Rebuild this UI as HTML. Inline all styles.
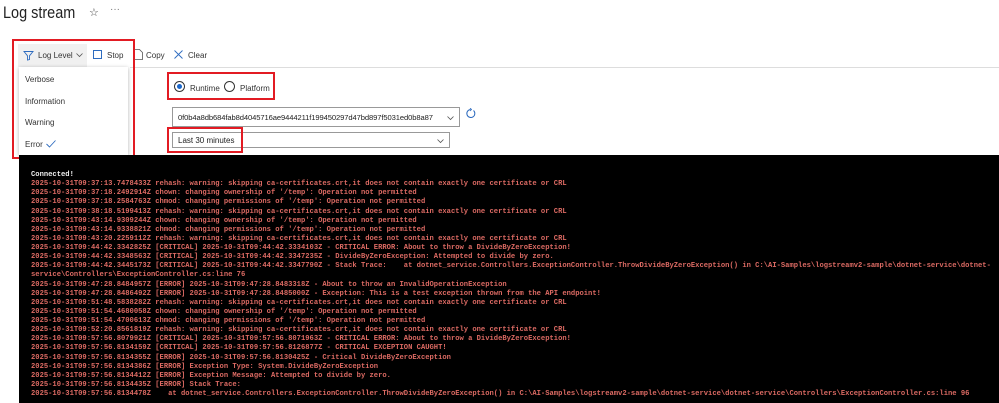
<!DOCTYPE html>
<html><head><meta charset="utf-8"><style>
body{margin:0;width:999px;height:403px;overflow:hidden;background:#fff;font-family:"Liberation Sans",sans-serif;position:relative}
.a{position:absolute}
.t{font-size:8px;color:#333}
.log{position:absolute;left:19px;top:155px;width:980px;height:248px;background:#000}
.log pre{margin:0;position:absolute;left:12px;top:16px;font-family:"Liberation Mono",monospace;font-size:7.15px;line-height:9.12px;color:#dc6a63;font-weight:bold;white-space:pre}
.red{position:absolute;border:2px solid #e21b23;box-sizing:border-box}
.dd{position:absolute;border:1px solid #999;background:#fff;box-sizing:border-box;font-size:8px;color:#222}
</style></head><body>
<div class="a" style="left:3px;top:3px;font-size:17px;color:#222;transform:scaleX(0.85);transform-origin:0 0">Log stream</div>
<div class="a" style="left:89px;top:6px;font-size:11px;color:#444">☆</div>
<div class="a" style="left:110px;top:4px;font-size:10px;color:#777">···</div>
<div class="a" style="left:130px;top:67px;width:869px;height:1px;background:#ddd"></div>
<div class="a" style="left:18px;top:44px;width:69px;height:23px;background:#f0f0f0"></div>
<svg class="a" style="left:23px;top:50px" width="11" height="11" viewBox="0 0 11 11"><path d="M1 1.5h9L6.5 5.8V9.5L4.5 10V5.8Z" fill="none" stroke="#2d6bbf" stroke-width="0.9"/></svg>
<div class="a t" style="left:38px;top:51px">Log Level</div>
<svg class="a" style="left:76px;top:53px" width="7" height="5"><path d="M0.5 0.5L3.5 3.5L6.5 0.5" fill="none" stroke="#555" stroke-width="0.8"/></svg>
<div class="a" style="left:93px;top:50px;width:9px;height:9px;border:1px solid #2d6bbf;box-sizing:border-box"></div>
<div class="a t" style="left:107px;top:51px">Stop</div>
<svg class="a" style="left:134px;top:49px" width="9" height="11"><path d="M0.5 0.5h5l3 3v7h-8z" fill="none" stroke="#555" stroke-width="0.8"/></svg>
<div class="a t" style="left:146px;top:51px">Copy</div>
<svg class="a" style="left:174px;top:50px" width="9" height="9"><path d="M0.5 0.5l8 8M8.5 0.5l-8 8" stroke="#2d6bbf" stroke-width="0.9"/></svg>
<div class="a t" style="left:188px;top:51px">Clear</div>
<div class="a" style="left:19px;top:67px;width:109px;height:88px;background:#fff;box-shadow:0 1px 4px rgba(0,0,0,.3)"></div>
<div class="a t" style="left:25px;top:75px">Verbose</div>
<div class="a t" style="left:25px;top:97px">Information</div>
<div class="a t" style="left:25px;top:118px">Warning</div>
<div class="a t" style="left:25px;top:140px">Error</div>
<svg class="a" style="left:46px;top:140px" width="10" height="8"><path d="M0.5 4l3 3 6-6.5" fill="none" stroke="#2d6bbf" stroke-width="0.9"/></svg>
<div class="red" style="left:12px;top:39px;width:123px;height:120px"></div>
<div class="a" style="left:174px;top:81px;width:11px;height:11px;border:1px solid #333;border-radius:50%;box-sizing:border-box"></div>
<div class="a" style="left:177px;top:84px;width:5px;height:5px;background:#1a66c9;border-radius:50%"></div>
<div class="a t" style="left:190px;top:84px">Runtime</div>
<div class="a" style="left:224px;top:81px;width:11px;height:11px;border:1px solid #333;border-radius:50%;box-sizing:border-box"></div>
<div class="a t" style="left:240px;top:84px">Platform</div>
<div class="red" style="left:167px;top:72px;width:108px;height:28px"></div>
<div class="dd" style="left:172px;top:107px;width:288px;height:20px"><span style="position:absolute;left:5px;top:5px;font-size:7.6px;letter-spacing:-0.1px">0f0b4a8db684fab8d4045716ae9444211f199450297d47bd897f5031ed0b8a87</span>
<svg style="position:absolute;right:5px;top:8px;background:#fff" width="7" height="5"><path d="M0.5 0.5L3.5 3.5L6.5 0.5" fill="none" stroke="#555" stroke-width="0.8"/></svg></div>
<svg class="a" style="left:465px;top:108px" width="11" height="11"><path d="M8.5 2.5A4 4 0 1 1 5.5 1.5" fill="none" stroke="#2d6bbf" stroke-width="1"/><path d="M5 0l1.5 1.5L5 3" fill="none" stroke="#2d6bbf" stroke-width="0.8"/></svg>
<div class="dd" style="left:172px;top:132px;width:278px;height:16px"><span style="position:absolute;left:5px;top:3px">Last 30 minutes</span>
<svg style="position:absolute;right:5px;top:6px" width="7" height="5"><path d="M0.5 0.5L3.5 3.5L6.5 0.5" fill="none" stroke="#555" stroke-width="0.8"/></svg></div>
<div class="red" style="left:167px;top:127px;width:76px;height:26px"></div>
<div class="log"><pre><span style="color:#eee">Connected!</span>
2025-10-31T09:37:13.7478433Z rehash: warning: skipping ca-certificates.crt,it does not contain exactly one certificate or CRL
2025-10-31T09:37:18.2492914Z chown: changing ownership of '/temp': Operation not permitted
2025-10-31T09:37:18.2584763Z chmod: changing permissions of '/temp': Operation not permitted
2025-10-31T09:38:18.5199413Z rehash: warning: skipping ca-certificates.crt,it does not contain exactly one certificate or CRL
2025-10-31T09:43:14.9309244Z chown: changing ownership of '/temp': Operation not permitted
2025-10-31T09:43:14.9338821Z chmod: changing permissions of '/temp': Operation not permitted
2025-10-31T09:43:20.2259112Z rehash: warning: skipping ca-certificates.crt,it does not contain exactly one certificate or CRL
2025-10-31T09:44:42.3342825Z [CRITICAL] 2025-10-31T09:44:42.3334103Z - CRITICAL ERROR: About to throw a DivideByZeroException!
2025-10-31T09:44:42.3348563Z [CRITICAL] 2025-10-31T09:44:42.3347235Z - DivideByZeroException: Attempted to divide by zero.
2025-10-31T09:44:42.3445173Z [CRITICAL] 2025-10-31T09:44:42.3347790Z - Stack Trace:    at dotnet_service.Controllers.ExceptionController.ThrowDivideByZeroException() in C:\AI-Samples\logstreamv2-sample\dotnet-service\dotnet-
service\Controllers\ExceptionController.cs:line 76
2025-10-31T09:47:28.8484957Z [ERROR] 2025-10-31T09:47:28.8483318Z - About to throw an InvalidOperationException
2025-10-31T09:47:28.8486492Z [ERROR] 2025-10-31T09:47:28.8485000Z - Exception: This is a test exception thrown from the API endpoint!
2025-10-31T09:51:48.5838282Z rehash: warning: skipping ca-certificates.crt,it does not contain exactly one certificate or CRL
2025-10-31T09:51:54.4680058Z chown: changing ownership of '/temp': Operation not permitted
2025-10-31T09:51:54.4700613Z chmod: changing permissions of '/temp': Operation not permitted
2025-10-31T09:52:20.8561819Z rehash: warning: skipping ca-certificates.crt,it does not contain exactly one certificate or CRL
2025-10-31T09:57:56.8079921Z [CRITICAL] 2025-10-31T09:57:56.8071963Z - CRITICAL ERROR: About to throw a DivideByZeroException!
2025-10-31T09:57:56.8134159Z [CRITICAL] 2025-10-31T09:57:56.8126877Z - CRITICAL EXCEPTION CAUGHT!
2025-10-31T09:57:56.8134355Z [ERROR] 2025-10-31T09:57:56.8130425Z - Critical DivideByZeroException
2025-10-31T09:57:56.8134386Z [ERROR] Exception Type: System.DivideByZeroException
2025-10-31T09:57:56.8134412Z [ERROR] Exception Message: Attempted to divide by zero.
2025-10-31T09:57:56.8134435Z [ERROR] Stack Trace:
2025-10-31T09:57:56.8134478Z    at dotnet_service.Controllers.ExceptionController.ThrowDivideByZeroException() in C:\AI-Samples\logstreamv2-sample\dotnet-service\dotnet-service\Controllers\ExceptionController.cs:line 96</pre></div>
</body></html>
